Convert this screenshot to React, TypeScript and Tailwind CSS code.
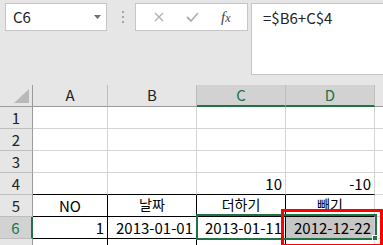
const font = { fontFamily: '"Noto Sans CJK KR", "Noto Sans", sans-serif' };

type Cell = {
  text?: string;
  align?: "left" | "center" | "right";
  ko?: boolean;
  className?: string;
};

const widths = ["w-[75px]", "w-[89px]", "w-[89px]", "w-[89px]", "w-[10px]"];

const rows: { label: string; selected?: boolean; cells: Cell[] }[] = [
  { label: "1", cells: [{}, {}, {}, {}, {}] },
  { label: "2", cells: [{}, {}, {}, {}, {}] },
  { label: "3", cells: [{}, {}, {}, {}, {}] },
  {
    label: "4",
    cells: [
      { className: "border-b-black" },
      { className: "border-b-black" },
      { text: "10", align: "right", className: "border-b-black" },
      { text: "-10", align: "right", className: "border-b-black" },
      {},
    ],
  },
  {
    label: "5",
    cells: [
      { text: "NO", align: "center", className: "border-r-black border-b-black" },
      { text: "날짜", align: "center", ko: true, className: "border-r-black border-b-black" },
      { text: "더하기", align: "center", ko: true, className: "border-r-black border-b-black" },
      { text: "빼기", align: "center", ko: true, className: "border-b-black" },
      {},
    ],
  },
  {
    label: "6",
    selected: true,
    cells: [
      { text: "1", align: "right", className: "border-r-black border-b-black" },
      { text: "2013-01-01", align: "right", className: "border-r-black border-b-black" },
      { text: "2013-01-11", align: "right", className: "border-r-black border-b-black" },
      { text: "2012-12-22", align: "right", className: "border-b-black bg-[#c6c6c6]" },
      {},
    ],
  },
  {
    label: "7",
    cells: [
      { text: "2", align: "right", className: "border-r-black" },
      { text: "2013-01-15", align: "right", className: "border-r-black" },
      { className: "border-r-black" },
      {},
      {},
    ],
  },
];

function GridCell({ cell, width }: { cell: Cell; width: string }) {
  const justify =
    cell.align === "right" ? "justify-end" : cell.align === "center" ? "justify-center" : "justify-start";
  const type = cell.ko ? "pt-0 text-[14px] leading-[18px]" : "pt-[1px] text-[15px] leading-[20px]";
  return (
    <div
      className={`flex h-[22px] shrink-0 items-start border-r border-b border-[#d4d4d4] px-[3px] text-black ${type} ${justify} ${width} ${cell.className ?? ""}`}
    >
      {cell.text}
    </div>
  );
}

export default function App() {
  return (
    <div className="relative h-[245px] w-[383px] overflow-hidden bg-[#e6e6e6]" style={font}>
      {/* formula bar */}
      <div className="flex h-[85px] items-start pt-[3px]">
        <div className="ml-[5px] flex h-[28px] w-[102px] items-center justify-between border border-[#c6c6c6] bg-white pl-[7px] pr-[4px] text-[15px] text-[#222]">
          <span>C6</span>
          <svg width="8" height="5" viewBox="0 0 8 5">
            <path d="M0 0h7L3.5 4z" fill="#6d6d6d" />
          </svg>
        </div>
        <div className="ml-[14px] flex h-[28px] w-[3px] flex-col items-center justify-center gap-[3px]">
          <span className="h-[2px] w-[2px] bg-[#a6a6a6]" />
          <span className="h-[2px] w-[2px] bg-[#a6a6a6]" />
          <span className="h-[2px] w-[2px] bg-[#a6a6a6]" />
        </div>
        <div className="ml-[11px] flex h-[28px] w-[113px] items-center border border-[#c6c6c6] bg-white">
          <svg className="ml-[18px]" width="10" height="10" viewBox="0 0 10 10">
            <path d="M1 1l8 8M9 1l-8 8" stroke="#b0b0b0" strokeWidth="1.3" />
          </svg>
          <svg className="ml-[22px]" width="13" height="10" viewBox="0 0 13 10">
            <path d="M1 5l4 4 7-8" stroke="#b0b0b0" strokeWidth="1.8" fill="none" />
          </svg>
          <span
            className="ml-[22px] text-[15px] italic text-[#444]"
            style={{ fontFamily: '"Liberation Serif", serif' }}
          >
            f<span className="text-[12px]">x</span>
          </span>
        </div>
        <div className="ml-[3px] h-[72px] flex-1 border border-r-0 border-[#c6c6c6] bg-white pl-[11px] pt-[3px] text-[15px] text-[#222]">
          =$B6+C$4
        </div>
      </div>

      {/* column headers */}
      <div className="flex h-[22px]">
        <div className="relative h-[22px] w-[33px] shrink-0 border-r border-b border-[#9b9b9b] bg-[#e6e6e6]">
          <svg className="absolute right-[3px] bottom-[3px]" width="15" height="14" viewBox="0 0 15 14">
            <path d="M15 0v14H0z" fill="#b9b9b9" />
          </svg>
        </div>
        {["A", "B", "C", "D", ""].map((c, i) => {
          const sel = c === "C" || c === "D";
          return (
            <div
              key={i}
              className={`flex h-[22px] shrink-0 items-center justify-center border-r border-[#bdbdbd] text-[15px] ${widths[i]} ${
                sel
                  ? "border-b-2 border-b-[#217346] bg-[#d2d2d2] text-[#217346]"
                  : "border-b border-b-[#9b9b9b] bg-[#e6e6e6] text-[#222]"
              }`}
            >
              {c}
            </div>
          );
        })}
      </div>

      {/* rows */}
      {rows.map((row) => (
        <div key={row.label} className="flex bg-white">
          <div
            className={`flex h-[22px] w-[33px] shrink-0 items-start justify-center border-b border-[#bdbdbd] pt-[1px] text-[15px] leading-[20px] ${
              row.selected
                ? "border-r-2 border-r-[#217346] bg-[#d2d2d2] text-[#217346]"
                : "border-r border-r-[#9b9b9b] bg-[#e6e6e6] text-[#222]"
            }`}
          >
            {row.label}
          </div>
          {row.cells.map((cell, i) => (
            <GridCell key={i} cell={cell} width={widths[i]} />
          ))}
        </div>
      ))}

      {/* selection C6:D6 */}
      <div className="pointer-events-none absolute top-[214px] left-[196px] h-[26px] w-[181px] border-2 border-[#217346]" />
      <div className="pointer-events-none absolute top-[235px] left-[372px] h-[6px] w-[6px] border border-white bg-[#217346]" />
      {/* annotation */}
      <div className="pointer-events-none absolute top-[209px] left-[281px] h-[38px] w-[102px] border-[3px] border-[#ff0000]" />
    </div>
  );
}
